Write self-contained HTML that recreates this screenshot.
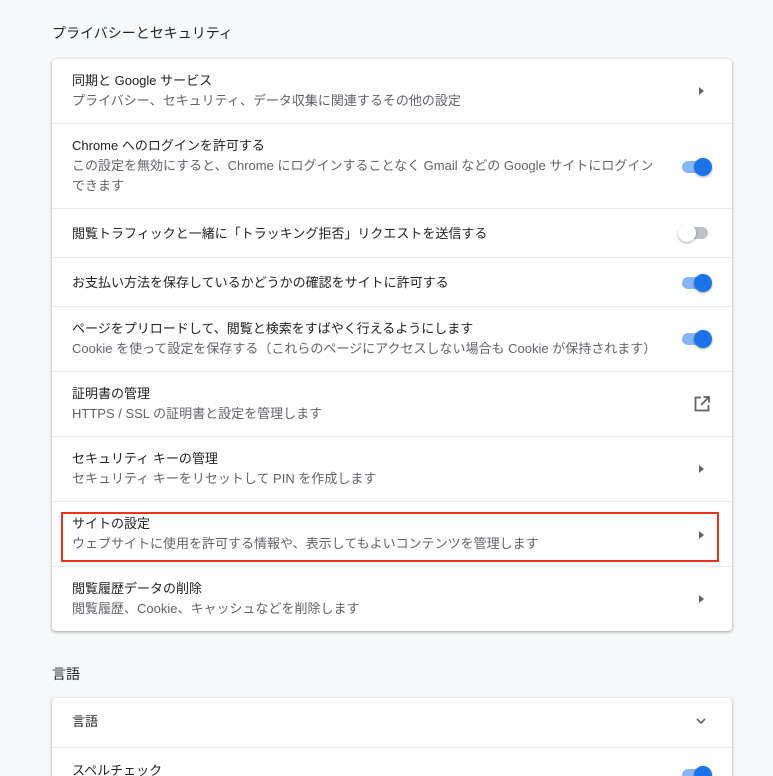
<!DOCTYPE html>
<html><head><meta charset="utf-8"><style>
*{margin:0;padding:0;box-sizing:border-box}
html,body{width:773px;height:776px;overflow:hidden}
body{background:#f8f9fa;font-family:"Liberation Sans","Noto Sans CJK JP",sans-serif;position:relative;color:#202124}
.h{position:absolute;left:52px;font-size:14px;color:#202124}
.card{position:absolute;left:52px;width:680px;background:#fff;border-radius:4px;box-shadow:0 1px 2px rgba(60,64,67,.3),0 1px 3px 1px rgba(60,64,67,.15)}
.row{position:absolute;left:0;width:680px;border-top:1px solid #e8eaed}
.row:first-child{border-top:none}
.t{position:absolute;left:20px;font-size:13px;color:#202124;white-space:nowrap;line-height:20px}
.s{position:absolute;left:20px;font-size:13px;color:#5f6368;white-space:nowrap;line-height:20px}
.arr{position:absolute;left:647px;width:0;height:0;border-top:4px solid transparent;border-bottom:4px solid transparent;border-left:5px solid #5f6368}
.tg{position:absolute;left:630px;width:26px;height:12px;border-radius:6px;background:#8ab4f8}
.tg::after{content:"";position:absolute;left:12px;top:-3px;width:18px;height:18px;border-radius:50%;background:#1a73e8;box-shadow:0 1px 2px rgba(0,0,0,.35)}
.tg.off{background:#bdc1c6}
.tg.off::after{left:-4px;background:#fff}
</style></head><body>
<div class="h" style="top:23px">プライバシーとセキュリティ</div>
<div class="card" style="top:59px;height:572px">
 <div class="row" style="top:0;height:64px"><div class="t" style="top:12px">同期と Google サービス</div><div class="s" style="top:32px">プライバシー、セキュリティ、データ収集に関連するその他の設定</div><div class="arr" style="top:28px"></div></div>
 <div class="row" style="top:64px;height:85px"><div class="t" style="top:12px">Chrome へのログインを許可する</div><div class="s" style="top:32px">この設定を無効にすると、Chrome にログインすることなく Gmail などの Google サイトにログイン<br>できます</div><div class="tg" style="top:37px"></div></div>
 <div class="row" style="top:149px;height:49px"><div class="t" style="top:15px">閲覧トラフィックと一緒に「トラッキング拒否」リクエストを送信する</div><div class="tg off" style="top:18px"></div></div>
 <div class="row" style="top:198px;height:49px"><div class="t" style="top:15px">お支払い方法を保存しているかどうかの確認をサイトに許可する</div><div class="tg" style="top:19px"></div></div>
 <div class="row" style="top:247px;height:65px"><div class="t" style="top:12px">ページをプリロードして、閲覧と検索をすばやく行えるようにします</div><div class="s" style="top:32px">Cookie を使って設定を保存する（これらのページにアクセスしない場合も Cookie が保持されます）</div><div class="tg" style="top:26px"></div></div>
 <div class="row" style="top:312px;height:65px"><div class="t" style="top:12px">証明書の管理</div><div class="s" style="top:32px">HTTPS / SSL の証明書と設定を管理します</div>
  <svg style="position:absolute;left:642px;top:24px" width="16" height="16" viewBox="0 0 16 16"><path d="M7 1.5H1.5v13h13V9" fill="none" stroke="#5f6368" stroke-width="1.8"/><path d="M9.5 1h5.5v5.5M14.5 1.5L7 9" fill="none" stroke="#5f6368" stroke-width="1.8"/></svg></div>
 <div class="row" style="top:377px;height:65px"><div class="t" style="top:12px">セキュリティ キーの管理</div><div class="s" style="top:32px">セキュリティ キーをリセットして PIN を作成します</div><div class="arr" style="top:28px"></div></div>
 <div class="row" style="top:442px;height:65px"><div class="t" style="top:12px">サイトの設定</div><div class="s" style="top:32px">ウェブサイトに使用を許可する情報や、表示してもよいコンテンツを管理します</div><div class="arr" style="top:29px"></div>
  <div style="position:absolute;left:9px;top:10px;width:658px;height:50px;border:2px solid #e8341c"></div></div>
 <div class="row" style="top:507px;height:65px"><div class="t" style="top:12px">閲覧履歴データの削除</div><div class="s" style="top:32px">閲覧履歴、Cookie、キャッシュなどを削除します</div><div class="arr" style="top:28px"></div></div>
</div>
<div class="h" style="top:664px">言語</div>
<div class="card" style="top:698px;height:78px;overflow:hidden;border-radius:4px 4px 0 0">
 <div class="row" style="top:0;height:49px"><div class="t" style="top:14px">言語</div>
  <svg style="position:absolute;left:644px;top:20px" width="10" height="7" viewBox="0 0 10 7"><path d="M1 1l4 4 4-4" fill="none" stroke="#5f6368" stroke-width="1.6"/></svg></div>
 <div class="row" style="top:49px;height:29px"><div class="t" style="top:13px">スペルチェック</div><div class="tg" style="top:21px"></div></div>
</div>
</body></html>
